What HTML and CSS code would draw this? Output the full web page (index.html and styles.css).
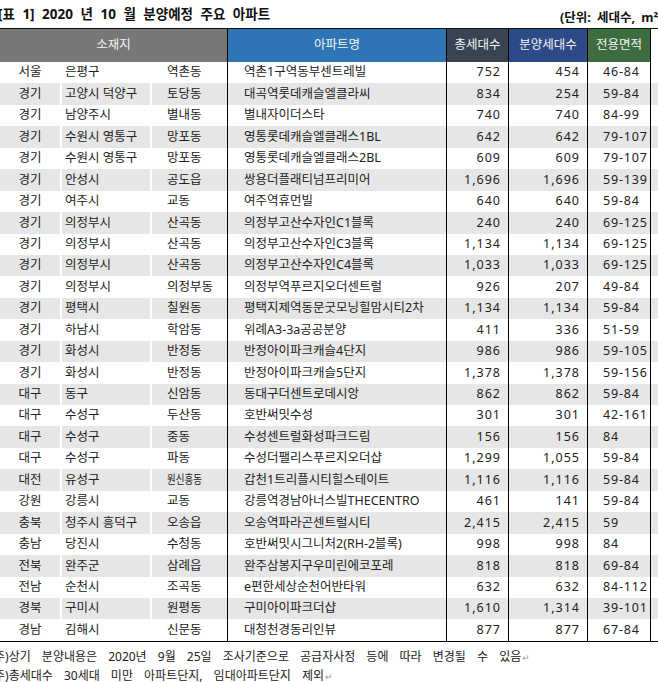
FILE: index.html
```html
<!DOCTYPE html>
<html lang="ko">
<head>
<meta charset="utf-8">
<title>2020년 10월 분양예정 주요 아파트</title>
<link rel="stylesheet" href="styles.css">
</head>
<body>
<div class="page">
  <div class="titlebar">
    <div class="title">[표 1] 2020 년 10 월 분양예정 주요 아파트</div>
    <div class="unit">(단위: 세대수, m²)</div>
  </div>
  <div class="grid">
    <div class="row head">
      <div class="c h-loc">소재지</div>
      <div class="c h-apt">아파트명</div>
      <div class="c h-total">총세대수</div>
      <div class="c h-sale">분양세대수</div>
      <div class="c h-area">전용면적</div>
      <div class="c pad"></div>
    </div>
    <div class="row"><div class="c sido">서울</div><div class="c sgg">은평구</div><div class="c dong">역촌동</div><div class="c apt">역촌1구역동부센트레빌</div><div class="c num">752</div><div class="c num">454</div><div class="c area">46-84</div><div class="c pad"></div></div>
    <div class="row alt"><div class="c sido">경기</div><div class="c sgg">고양시 덕양구</div><div class="c dong">토당동</div><div class="c apt">대곡역롯데캐슬엘클라씨</div><div class="c num">834</div><div class="c num">254</div><div class="c area">59-84</div><div class="c pad"></div></div>
    <div class="row"><div class="c sido">경기</div><div class="c sgg">남양주시</div><div class="c dong">별내동</div><div class="c apt">별내자이더스타</div><div class="c num">740</div><div class="c num">740</div><div class="c area">84-99</div><div class="c pad"></div></div>
    <div class="row alt"><div class="c sido">경기</div><div class="c sgg">수원시 영통구</div><div class="c dong">망포동</div><div class="c apt">영통롯데캐슬엘클래스1BL</div><div class="c num">642</div><div class="c num">642</div><div class="c area">79-107</div><div class="c pad"></div></div>
    <div class="row"><div class="c sido">경기</div><div class="c sgg">수원시 영통구</div><div class="c dong">망포동</div><div class="c apt">영통롯데캐슬엘클래스2BL</div><div class="c num">609</div><div class="c num">609</div><div class="c area">79-107</div><div class="c pad"></div></div>
    <div class="row alt"><div class="c sido">경기</div><div class="c sgg">안성시</div><div class="c dong">공도읍</div><div class="c apt">쌍용더플래티넘프리미어</div><div class="c num">1,696</div><div class="c num">1,696</div><div class="c area">59-139</div><div class="c pad"></div></div>
    <div class="row"><div class="c sido">경기</div><div class="c sgg">여주시</div><div class="c dong">교동</div><div class="c apt">여주역휴먼빌</div><div class="c num">640</div><div class="c num">640</div><div class="c area">59-84</div><div class="c pad"></div></div>
    <div class="row alt"><div class="c sido">경기</div><div class="c sgg">의정부시</div><div class="c dong">산곡동</div><div class="c apt">의정부고산수자인C1블록</div><div class="c num">240</div><div class="c num">240</div><div class="c area">69-125</div><div class="c pad"></div></div>
    <div class="row"><div class="c sido">경기</div><div class="c sgg">의정부시</div><div class="c dong">산곡동</div><div class="c apt">의정부고산수자인C3블록</div><div class="c num">1,134</div><div class="c num">1,134</div><div class="c area">69-125</div><div class="c pad"></div></div>
    <div class="row alt"><div class="c sido">경기</div><div class="c sgg">의정부시</div><div class="c dong">산곡동</div><div class="c apt">의정부고산수자인C4블록</div><div class="c num">1,033</div><div class="c num">1,033</div><div class="c area">69-125</div><div class="c pad"></div></div>
    <div class="row"><div class="c sido">경기</div><div class="c sgg">의정부시</div><div class="c dong">의정부동</div><div class="c apt">의정부역푸르지오더센트럴</div><div class="c num">926</div><div class="c num">207</div><div class="c area">49-84</div><div class="c pad"></div></div>
    <div class="row alt"><div class="c sido">경기</div><div class="c sgg">평택시</div><div class="c dong">칠원동</div><div class="c apt">평택지제역동문굿모닝힐맘시티2차</div><div class="c num">1,134</div><div class="c num">1,134</div><div class="c area">59-84</div><div class="c pad"></div></div>
    <div class="row"><div class="c sido">경기</div><div class="c sgg">하남시</div><div class="c dong">학암동</div><div class="c apt">위례A3-3a공공분양</div><div class="c num">411</div><div class="c num">336</div><div class="c area">51-59</div><div class="c pad"></div></div>
    <div class="row alt"><div class="c sido">경기</div><div class="c sgg">화성시</div><div class="c dong">반정동</div><div class="c apt">반정아이파크캐슬4단지</div><div class="c num">986</div><div class="c num">986</div><div class="c area">59-105</div><div class="c pad"></div></div>
    <div class="row"><div class="c sido">경기</div><div class="c sgg">화성시</div><div class="c dong">반정동</div><div class="c apt">반정아이파크캐슬5단지</div><div class="c num">1,378</div><div class="c num">1,378</div><div class="c area">59-156</div><div class="c pad"></div></div>
    <div class="row alt"><div class="c sido">대구</div><div class="c sgg">동구</div><div class="c dong">신암동</div><div class="c apt">동대구더센트로데시앙</div><div class="c num">862</div><div class="c num">862</div><div class="c area">59-84</div><div class="c pad"></div></div>
    <div class="row"><div class="c sido">대구</div><div class="c sgg">수성구</div><div class="c dong">두산동</div><div class="c apt">호반써밋수성</div><div class="c num">301</div><div class="c num">301</div><div class="c area">42-161</div><div class="c pad"></div></div>
    <div class="row alt"><div class="c sido">대구</div><div class="c sgg">수성구</div><div class="c dong">중동</div><div class="c apt">수성센트럴화성파크드림</div><div class="c num">156</div><div class="c num">156</div><div class="c area">84</div><div class="c pad"></div></div>
    <div class="row"><div class="c sido">대구</div><div class="c sgg">수성구</div><div class="c dong">파동</div><div class="c apt">수성더팰리스푸르지오더샵</div><div class="c num">1,299</div><div class="c num">1,055</div><div class="c area">59-84</div><div class="c pad"></div></div>
    <div class="row alt"><div class="c sido">대전</div><div class="c sgg">유성구</div><div class="c dong"><span class="narrow">원신흥동</span></div><div class="c apt">갑천1트리플시티힐스테이트</div><div class="c num">1,116</div><div class="c num">1,116</div><div class="c area">59-84</div><div class="c pad"></div></div>
    <div class="row"><div class="c sido">강원</div><div class="c sgg">강릉시</div><div class="c dong">교동</div><div class="c apt">강릉역경남아너스빌THECENTRO</div><div class="c num">461</div><div class="c num">141</div><div class="c area">59-84</div><div class="c pad"></div></div>
    <div class="row alt"><div class="c sido">충북</div><div class="c sgg">청주시 흥덕구</div><div class="c dong">오송읍</div><div class="c apt">오송역파라곤센트럴시티</div><div class="c num">2,415</div><div class="c num">2,415</div><div class="c area">59</div><div class="c pad"></div></div>
    <div class="row"><div class="c sido">충남</div><div class="c sgg">당진시</div><div class="c dong">수청동</div><div class="c apt">호반써밋시그니처2(RH-2블록)</div><div class="c num">998</div><div class="c num">998</div><div class="c area">84</div><div class="c pad"></div></div>
    <div class="row alt"><div class="c sido">전북</div><div class="c sgg">완주군</div><div class="c dong">삼례읍</div><div class="c apt">완주삼봉지구우미린에코포레</div><div class="c num">818</div><div class="c num">818</div><div class="c area">69-84</div><div class="c pad"></div></div>
    <div class="row"><div class="c sido">전남</div><div class="c sgg">순천시</div><div class="c dong">조곡동</div><div class="c apt">e편한세상순천어반타워</div><div class="c num">632</div><div class="c num">632</div><div class="c area">84-112</div><div class="c pad"></div></div>
    <div class="row alt"><div class="c sido">경북</div><div class="c sgg">구미시</div><div class="c dong">원평동</div><div class="c apt">구미아이파크더샵</div><div class="c num">1,610</div><div class="c num">1,314</div><div class="c area">39-101</div><div class="c pad"></div></div>
    <div class="row"><div class="c sido">경남</div><div class="c sgg">김해시</div><div class="c dong">신문동</div><div class="c apt">대청천경동리인뷰</div><div class="c num">877</div><div class="c num">877</div><div class="c area">67-84</div><div class="c pad"></div></div>
  </div>
  <div class="notes">
    <p class="note">주)상기 분양내용은 2020년 9월 25일 조사기준으로 공급자사정 등에 따라 변경될 수 있음<span class="ret">↵</span></p>
    <p class="note">주)총세대수 30세대 미만 아파트단지, 임대아파트단지 제외<span class="ret">↵</span></p>
  </div>
</div>
</body>
</html>
```
FILE: styles.css
```css
html, body {
  margin: 0;
  padding: 0;
  background: #fff;
}
body {
  font-family: "Noto Sans", "Noto Sans CJK KR", sans-serif;
  font-size: 12.5px;
  color: #222;
  overflow: hidden;
}
.page {
  width: 658px;
}
.titlebar {
  display: flex;
  justify-content: space-between;
  align-items: flex-start;
  height: 28px;
  padding-top: 6px;
  box-sizing: border-box;
}
.title {
  font-weight: 700;
  font-size: 13.5px;
  line-height: 17px;
  margin-left: -2px;
  word-spacing: 4px;
  color: #111;
}
.unit {
  flex-shrink: 0;
  width: 98px;
  font-weight: 700;
  font-size: 12.5px;
  line-height: 17px;
  padding-top: 3px;
  word-spacing: 3px;
  white-space: nowrap;
  overflow: hidden;
  color: #111;
}
.grid {
  display: grid;
  grid-template-columns: 62px 90px 76px 219px 62px 79px 63px 7px;
  grid-template-rows: 34px;
  grid-auto-rows: 21.44px;
  border-bottom: 1px solid #000;
}
.row {
  display: contents;
}
.c {
  display: flex;
  align-items: center;
  box-sizing: border-box;
  white-space: nowrap;
  overflow: hidden;
  line-height: 1;
}
.row.alt .c {
  background: #e6e6e6;
}
.head .c {
  justify-content: center;
  color: #f4f4f4;
  border-top: 1px solid #111;
  border-right: 1px solid #000;
}
.head .pad {
  background: #fff;
  border-right: none;
}
.h-loc {
  grid-column: span 3;
  background: #777;
}
.h-apt {
  background: #2e75b6;
}
.h-total {
  background: #394352;
}
.h-sale {
  background: #2d4a88;
}
.h-area {
  background: #3d6c3f;
}
.sido {
  justify-content: center;
  border-right: 2px solid #fff;
}
.sgg {
  padding-left: 3px;
  border-right: 2px solid #fff;
}
.dong {
  padding-left: 15px;
  border-right: 1px solid #000;
}
.narrow {
  display: inline-block;
  transform: scaleX(0.76);
  transform-origin: left center;
}
.apt {
  padding-left: 16px;
  border-right: 1px solid #000;
}
.num {
  justify-content: flex-end;
  padding-right: 7px;
  border-right: 1px solid #000;
  letter-spacing: 1px;
}
.area {
  padding-left: 15px;
  border-right: 1px solid #000;
  letter-spacing: 0.8px;
}
.notes {
  margin-top: 6px;
  margin-left: -6px;
}
.note {
  margin: 0;
  font-size: 12px;
  line-height: 18px;
  white-space: nowrap;
  word-spacing: 8px;
  color: #222;
}
.ret {
  color: #9a9a9a;
  font-size: 9px;
  margin-left: 1px;
}
```
